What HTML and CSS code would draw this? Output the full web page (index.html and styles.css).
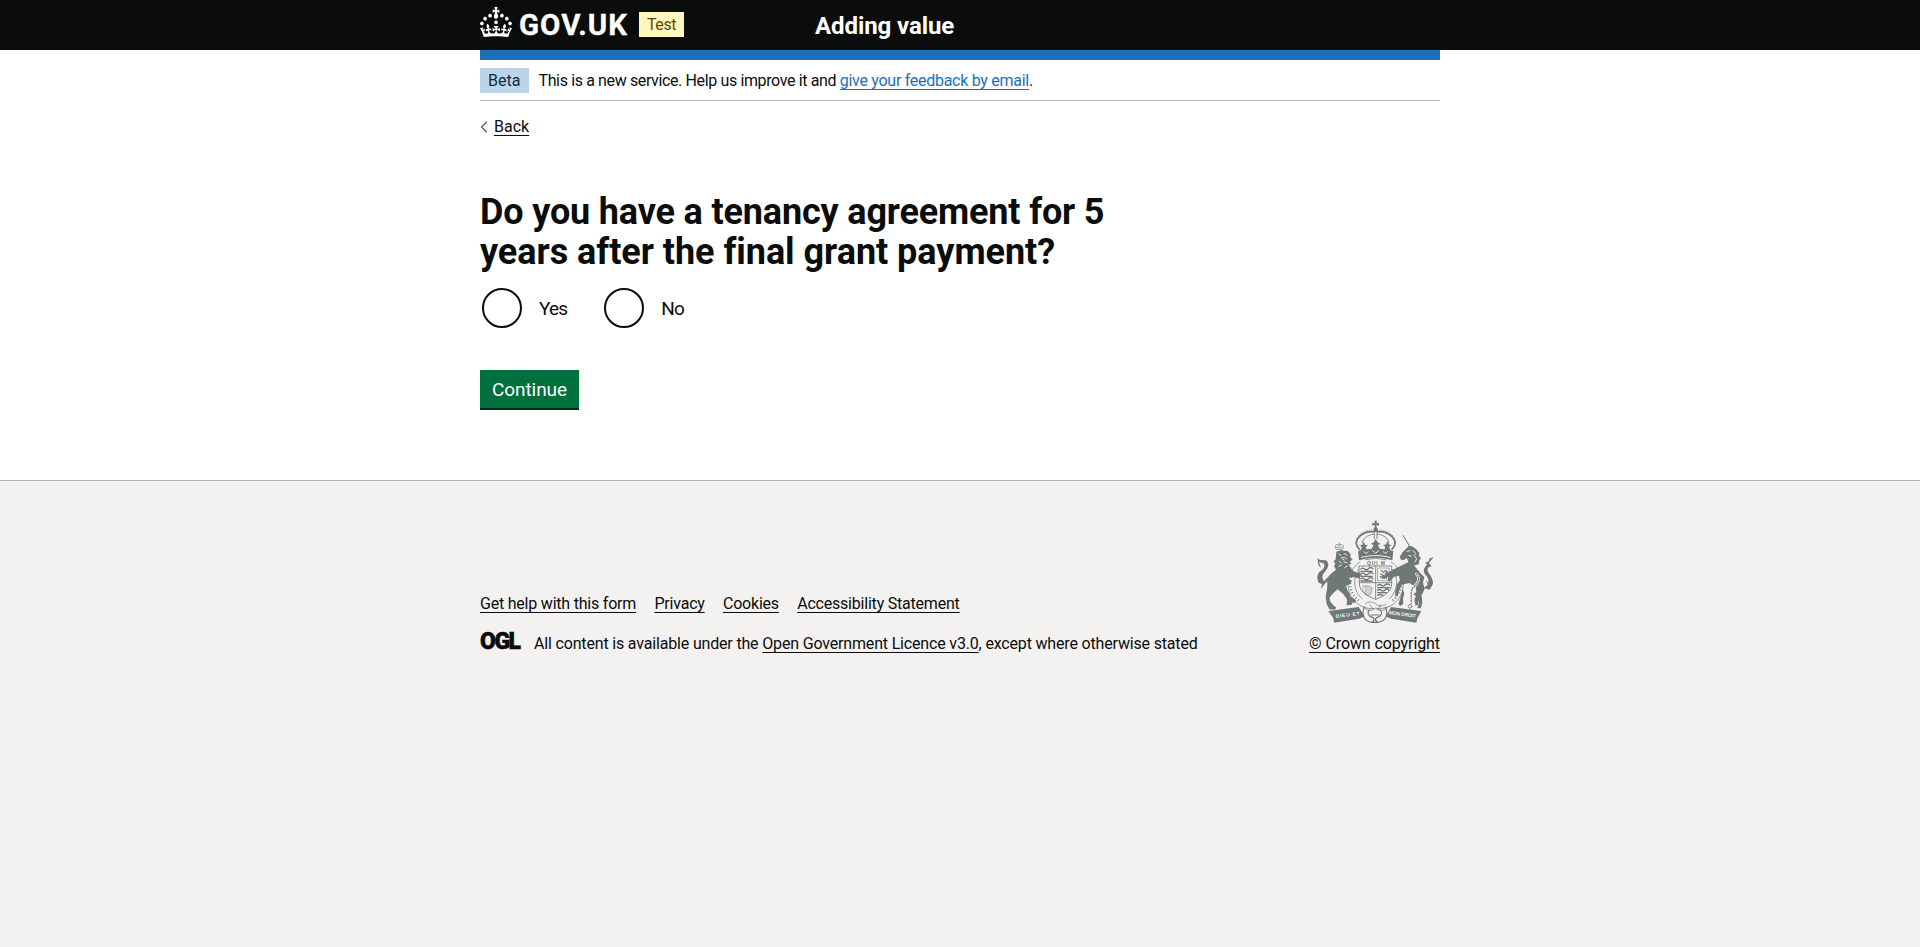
FILE: index.html
```html
<!DOCTYPE html>
<html lang="en">
<head>
<meta charset="utf-8">
<title>Adding value</title>
<link rel="stylesheet" href="styles.css">
</head>
<body>
<header class="header">
  <div class="container header-row">
    <div class="header-logo">
      <svg class="crown" viewBox="0 0 32 30" width="32" height="30" fill="#fff" aria-hidden="true"><path d="M22.6 10.4c-1 .4-2-.1-2.4-1-.4-.9.1-2 1-2.4.9-.4 2 .1 2.4 1s-.1 2-1 2.4m-5.9 6.7c-.9.4-2-.1-2.4-1-.4-.9.1-2 1-2.4.9-.4 2 .1 2.4 1s-.1 2-1 2.4m10.8-3.7c-1 .4-2-.1-2.4-1-.4-.9.1-2 1-2.4.9-.4 2 .1 2.4 1s0 2-1 2.4m3.3 4.8c-1 .4-2-.1-2.4-1-.4-.9.1-2 1-2.4.9-.4 2 .1 2.4 1s-.1 2-1 2.4M17 4.7l2.3 1.2V2.5l-2.3.7-.2-.2.9-3h-3.4l.9 3-.2.2c-.1.1-2.3-.7-2.3-.7v3.4L15 4.7c.1.1.1.2.2.2l-1.3 4c-.1.2-.1.4-.1.6 0 1.1.8 2 1.9 2.2h.7c1-.2 1.9-1.1 1.9-2.1 0-.2 0-.4-.1-.6l-1.3-4c-.1-.2 0-.2.1-.3m-7.6 5.7c.9.4 2-.1 2.4-1 .4-.9-.1-2-1-2.4-.9-.4-2 .1-2.4 1s0 2 1 2.4m-5 3c.9.4 2-.1 2.4-1 .4-.9-.1-2-1-2.4-.9-.4-2 .1-2.4 1s.1 2 1 2.4m-3.2 4.8c.9.4 2-.1 2.4-1 .4-.9-.1-2-1-2.4-.9-.4-2 .1-2.4 1s0 2 1 2.4m14.8 11c4.4 0 8.6.3 12.3.8 1.1-4.5 2.4-7 3.7-8.8l-2.5-.9c.2 1.3.3 1.9 0 2.7-.4-.4-.8-1.1-1.1-2.3l-1.2 4c.7-.5 1.3-.8 2-.9-1.1 2.5-2.6 3.1-3.5 3-1.1-.2-1.7-1.2-1.5-2.1.3-1.2 1.5-1.5 2.1-.1 1.1-2.3-.8-3-2-2.3 1.9-1.9 2.1-3.5.6-5.6-2.1 1.6-2.1 3.2-1.2 5.5-1.2-1.4-3.2-.6-2.5 1.6.9-1.4 2.1-.5 1.9.8-.2 1.1-1.7 2.1-3.5 1.9-2.7-.2-2.9-2.1-2.9-3.6.7-.1 1.9.5 2.9 1.9l.4-4.3c-1.1 1.1-2.1 1.4-3.2 1.4.4-1.2 2.1-3 2.1-3h-5.4s1.7 1.9 2.1 3c-1.1 0-2.1-.2-3.2-1.4l.4 4.3c1-1.4 2.2-2 2.9-1.9-.1 1.5-.2 3.4-2.9 3.6-1.9.2-3.4-.8-3.5-1.9-.2-1.3 1-2.2 1.9-.8.7-2.3-1.2-3-2.5-1.6.9-2.2.9-3.9-1.2-5.5-1.5 2-1.3 3.7.6 5.6-1.2-.7-3.1 0-2 2.3.6-1.4 1.8-1.1 2.1.1.2.9-.3 1.9-1.5 2.1-.9.2-2.4-.5-3.5-3 .6 0 1.2.3 2 .9l-1.2-4c-.3 1.1-.7 1.9-1.1 2.3-.3-.8-.2-1.4 0-2.7l-2.9.9C1.3 23 2.6 25.5 3.7 30c3.7-.5 7.9-.8 12.3-.8"/></svg>
      <span class="wordmark">GOV.UK</span>
      <strong class="tag tag-yellow">Test</strong>
    </div>
    <div class="service-name">Adding value</div>
  </div>
</header>
<div class="page">
  <div class="container">
    <div class="blue-bar"></div>
    <div class="phase-banner">
      <strong class="tag tag-blue">Beta</strong>
      <span class="phase-text">This is a new service. Help us improve it and <a class="link" href="#">give your feedback by email</a>.</span>
    </div>
    <div class="back"><svg width="8" height="12" viewBox="0 0 8 12" fill="none" stroke="#505a5f" stroke-width="1.2"><path d="M6.8 .8 1.5 6l5.3 5.2"/></svg><a href="#">Back</a></div>
    <main>
      <h1 class="heading">Do you have a tenancy agreement for 5<br><span class="heading-end">years after the final grant payment?</span></h1>
      <div class="radios">
        <label class="radio"><span class="circle"></span><span class="radio-label">Yes</span></label>
        <label class="radio"><span class="circle"></span><span class="radio-label">No</span></label>
      </div>
      <button class="button">Continue</button>
    </main>
  </div>
</div>
<footer class="footer">
  <div class="container footer-row">
    <div class="footer-meta">
      <div class="footer-links"><a href="#">Get help with this form</a><a href="#">Privacy</a><a href="#">Cookies</a><a href="#">Accessibility Statement</a></div>
      <div class="licence"><span class="ogl">OGL</span><span>All content is available under the <a href="#">Open Government Licence v3.0</a>, except where otherwise stated</span></div>
    </div>
    <div class="copyright">
      <svg class="crest" width="125" height="104" viewBox="36 30 375 312" fill="none" stroke="#6f7777" stroke-width="3" stroke-linecap="round" stroke-linejoin="round" aria-hidden="true">
        <!-- crown -->
        <g fill="#6f7777" stroke="none">
          <path d="M223 32h8l-2 8 8-2v9l-8-2 2 11h-8l2-11-8 2v-9l8 2z"/>
          <circle cx="227" cy="60" r="7"/>
          <path d="M174 123q53-13 106 0l-3 28q-50-15-100 0z"/>
          <path d="m181 123 5-12-8-4 9-3 4-9 4 9 9 3-7 4 4 12zM214 118l7-13-9-3 9-5 6-10 6 10 9 5-9 3 7 13zM252 122l4-12-7-4 9-3 4-9 4 9 9 3-8 4 5 12z"/>
        </g>
        <path d="M178 118c-26-28 11-56 44-53M276 118c26-28-11-56-44-53" stroke-width="5"/>
        <path d="M188 100c-4-14 16-25 34-28M266 100c4-14-16-25-34-28M223 68v18M231 68v18" stroke-width="2.5"/>
        <path d="M172 111c-14-28 15-51 46-51M282 111c14-28-15-51-46-51" stroke-width="3" stroke-dasharray=".1 6"/>
        <path d="M184 142q43-11 86 0M192 125l6 6 6-6M218 122l9 8 9-8M250 125l6 6 6-6" stroke="#f3f2f1" stroke-width="3"/>
        <!-- garter -->
        <g stroke-width="2.2">
          <path d="M180 156c-45 30-48 94-8 125 20 15 42 16 52 14M274 156c45 30 48 94 8 125-20 15-42 16-52 14M196 149q31-8 62 0"/>
          <path d="M176 178c-20 28-14 68 10 88M278 178c20 28 14 68-10 88"/>
          <path d="M162 184c-20 32-14 64 14 88M292 184c20 32 14 64-14 88" stroke-width="8" stroke-dasharray="2.5 7" stroke-linecap="butt"/>
          <path d="M196 282c8-8 22-8 31 0s22 8 31 0M190 290c12 16 28 12 37 4 9 9 26 11 38-4M210 285l8 12M242 284l-8 16"/>
        </g>
        <text x="201" y="164" class="crest-motto" textLength="54">QUI M</text>
        <!-- shield -->
        <path d="M178 168h97v52c0 27-24 38-48 48-25-10-49-21-49-48z" fill="#f3f2f1" stroke-width="2.5"/>
        <path d="M227 168v99M178 218h97" stroke-width="2.5"/>
        <path d="M183 177q6-5 11 0t11-1 14 0M183 184h34M183 192q6-5 11 0t11-1 14 0M183 199h34M183 207q6-5 11 0t11-1 14 0M183 213h34" stroke-width="4"/>
        <path d="M234 174h34v38h-34z" stroke-width="1.6"/>
        <path d="M244 181l7 6 6-6 5 5-6 6 6 7M242 192l8 4-4 10M257 196l3 10M240 202l10-5" stroke-width="3.6"/>
        <path d="M190 228h15c12 0 14 9 8 22l-8 7c-14-6-20-15-15-29zM196 229v24M201 229v27M207 230v25M213 232v18" stroke-width="1.6"/>
        <path d="M233 226q6-5 11 0t11-1 14 0M233 233h35M233 241q6-5 11 0t11-1 11 0M233 248h27M233 256q6-5 16 0" stroke-width="4"/>
        <!-- lion -->
        <g fill="#6f7777" stroke="none">
          <path d="M109 125l12-4 22 2 9 10-1 8 7 8-8 5 4 8-8 2 14 20 13 5 9-4-2 8 6 2-6 4 1 7-9-2-15-3-11 2 9 12-5 8-12 4 4 14 8 12-2 18 10 8-4 6-14 1 1-19-12-16-16-13-12 10-12 14 1 12 10 12 9 7-5 6-16-1-8-16-3-22 4-22 1-17c-2-11 1-22 10-29l16-13-6-10 4-7-5-8 6-6z"/>
          <path d="M96 202l-20 18-14 18 4-16-10-4c-8-18-3-30 9-37 9-7 11-16 4-22l-12-2 6 16-7-6-4-22 8 5 18 1c12 10 7 23-3 34-9 9-11 20-2 29 4-8 12-14 20-16z"/>
          <path d="M151 276l14 3 3-8-13-10-12-2z"/>
        </g>
        <path d="M108 117c-8-14 6-16 10-10 4-6 18-4 10 10zM118 99v6M110 112h16" stroke-width="2.2"/>
        <path d="M117 132l6 4M133 131l8 4M124 144l10-2 6 5M117 154l7 5M132 156l9 2M128 148l5 2M124 165l-8 4M142 168l-8 5" stroke="#f3f2f1" stroke-width="2.6"/>
        <!-- unicorn -->
        <path d="M310 77 330 111" stroke-width="3"/>
        <g fill="#6f7777" stroke="none">
          <path d="M326 108l10 1 12 8 10 12-1 8 7 10-6 2-1 12-10 5-13 1-8-7-5-16-10 6-8-1-4-8 9-15 9-8z"/>
          <path d="M324 157l17 8 20 25 12 11-4 17 5 19-9 19-11 9 1 19-8 3-4-17 7-17-3-22-19-12-22 5-8 16-5 18-6 2-2-12 6-25 9-12-3-14-16 4-12 14-6-3 2-12-13 8-6-6 15-13 16-9z"/>
          <path d="M308 236l5 14-4 17 1 14-9 7-6-6 5-14z"/>
          <path d="M350 245l15 12 2 22-5 16-10-1 5-14-5-18-12-9z"/>
          <path d="M366 194l12 15 5 15-12 10 18 5 8-13 2-7c0-14-9-24-15-34-4-9 2-15 11-16l-8-11 14-16-12 3-4 10-9 2 5 7c-12 11-13 22-2 33 6 7 8 15 5 22-5-9-10-18-20-25z"/>
        </g>
        <path d="M321 124l9-2M338 121l9 9-5 7M345 139l5 8-5 9M326 137l8 1" stroke="#f3f2f1" stroke-width="2.6"/>
        <path d="M349 192c14 14 3 29-7 38s-9 23-6 35" stroke="#f3f2f1" stroke-width="8"/>
        <path d="M349 192c14 14 3 29-7 38s-9 23-8 50" stroke-width="4" stroke-dasharray="3 5"/>
        <circle cx="330" cy="289" r="5.5" stroke-width="2.5"/>
        <!-- scroll -->
        <path d="M85 303 176 291l18 28-16 7-76 12-2-13zM364 303l-91-12-16 28 16 7 76 12 3-13z" fill="#6f7777" stroke="none"/>
        <path d="M193 291c-9 20-4 40 18 45 12 2 15-11 6-14-12-3-17-14-9-22M256 291c9 20 4 40-18 45-12 2-15-11-6-14 12-3 17-14 9-22M213 315h24M216 337h18" stroke-width="3.5"/>
        <text x="108" y="324" class="crest-scroll" textLength="72" transform="rotate(-7 108 324)">DIEU ET</text>
        <text x="266" y="313" class="crest-scroll" textLength="82" transform="rotate(7 266 313)">MON DROIT</text>
      </svg>
      <a href="#">© Crown copyright</a>
    </div>
  </div>
</footer>
</body>
</html>
```
FILE: styles.css
```css
* { box-sizing: border-box; }
html { background: #f3f2f1; }
body { margin: 0; color: #0b0c0c; font: 16px/20px Roboto, "Liberation Sans", sans-serif; }
a { color: inherit; text-underline-offset: 3px; text-decoration-thickness: 1px; }
.container { width: 960px; margin: 0 auto; }

.header { background: #0b0c0c; height: 50px; color: #fff; }
.header-row { display: flex; }
.header-logo { width: 335px; display: flex; padding-top: 7px; }
.wordmark { font-size: 29.5px; font-weight: 700; line-height: 36px; letter-spacing: 1px; margin-left: 7px; width: 110px; -webkit-text-stroke: .3px #fff; }
.tag { font-weight: 400; height: 25px; line-height: 25px; padding: 0 8px; }
.tag-yellow { background: #fff7bf; color: #594d00; margin: 5px 0 0 10px; width: 45px; letter-spacing: -.4px; }
.tag-blue { background: #bbd4ea; color: #0c2d4a; margin-right: 9.5px; width: 49px; }
.service-name { font-size: 24px; font-weight: 700; line-height: 30px; padding-top: 11px; letter-spacing: -.08px; }

.page { background: #fff; height: 430px; }
.blue-bar { height: 10px; background: #1d70b8; }
.phase-banner { display: flex; height: 41px; padding-top: 8px; border-bottom: 1px solid #b1b4b6; line-height: 25px; }
.phase-text { letter-spacing: -.37px; }
.link { color: #1d70b8; letter-spacing: -.28px; }
.back { padding-top: 16px; display: flex; align-items: center; gap: 6px; height: 36px; }

.heading { font-size: 36px; line-height: 40px; margin: 55px 0 0; font-weight: 700; letter-spacing: -.16px; }
.heading-end { letter-spacing: -.03px; }
.radios { display: flex; gap: 35px; margin-top: 16px; font-size: 19px; line-height: 42px; height: 40px; }
.radio { display: flex; padding-left: 2px; gap: 17px; }
.radio-label { letter-spacing: -.8px; }
.circle { width: 40px; height: 40px; border: 2px solid #0b0c0c; border-radius: 50%; }
.button { display: block; margin-top: 42px; width: 99px; height: 40px; background: #00703c; color: #fff; border: 0; border-bottom: 2px solid #002d18; padding: 1px 0 0; font: 19px/37px Roboto, "Liberation Sans", sans-serif; letter-spacing: -.08px; }

.footer { border-top: 1px solid #b1b4b6; height: 467px; }
.footer-row { display: flex; justify-content: space-between; padding-top: 39px; }
.footer-meta { padding-top: 74px; }
.footer-links { display: flex; gap: 18.3px; letter-spacing: -.21px; margin-bottom: 18px; }
.licence { display: flex; align-items: baseline; letter-spacing: -.17px; }
.ogl { font-weight: 900; font-size: 23px; letter-spacing: -1.5px; width: 54px; -webkit-text-stroke: .5px #0b0c0c; }
.copyright { display: flex; flex-direction: column; align-items: center; letter-spacing: -.09px; gap: 10px; }
.crest-motto { font: bold 15px "Liberation Sans", sans-serif; fill: #6f7777; stroke: none; }
.crest-scroll { font: bold 15px "Liberation Sans", sans-serif; fill: #f3f2f1; stroke: none; }
```
